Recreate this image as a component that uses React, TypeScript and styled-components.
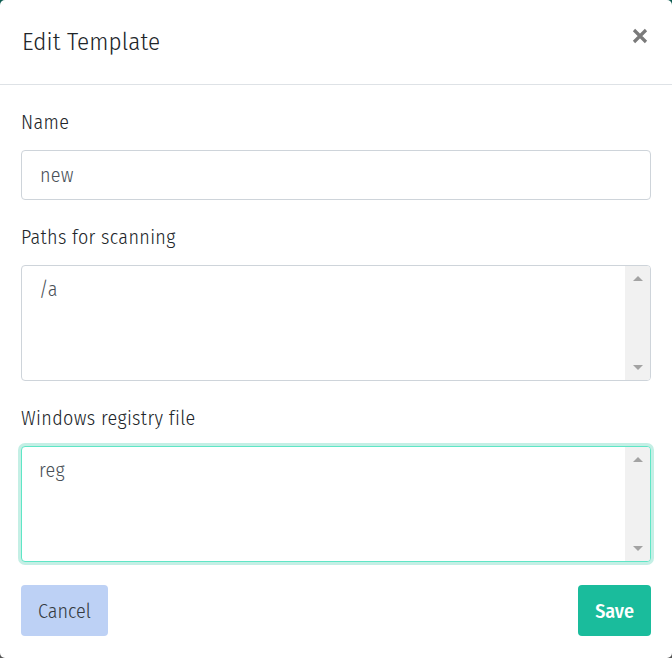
import React from "react";
import styled, { createGlobalStyle } from "styled-components";

const FONT = `"Fira Sans Condensed", "Liberation Sans Narrow", "DejaVu Sans Condensed", "Roboto Condensed", "Open Sans", sans-serif`;

const Global = createGlobalStyle`
  html, body { margin: 0; padding: 0; }
  body {
    background: linear-gradient(180deg, #0e5d52 0%, #2d4a45 60%, #555 100%);
    font-family: ${FONT};
  }
  * { box-sizing: border-box; }
`;

const Modal = styled.div`
  width: 672px;
  height: 658px;
  background: #fff;
  border-radius: 5px;
  display: flex;
  flex-direction: column;
  font-family: ${FONT};
  color: #212529;
`;

const Header = styled.div`
  height: 85px;
  padding: 0 22px;
  border-bottom: 1px solid #dee2e6;
  display: flex;
  align-items: center;
  justify-content: space-between;
`;

const Title = styled.h5`
  margin: 0;
  font-size: 25px;
  font-weight: 300;
  letter-spacing: 0.15px;
  line-height: 1.2;
  color: #212529;
`;

const Close = styled.button`
  border: 0;
  background: transparent;
  padding: 0;
  width: 18px;
  height: 18px;
  display: flex;
  align-items: center;
  justify-content: center;
  cursor: pointer;
  margin-top: -12px;
  margin-right: 1px;
`;

const Body = styled.div`
  padding: 24px 21px 0;
  display: flex;
  flex-direction: column;
`;

const Group = styled.div`
  display: flex;
  flex-direction: column;
  margin-bottom: 24px;
`;

const Label = styled.label`
  font-size: 20px;
  font-weight: 300;
  letter-spacing: 0.35px;
  line-height: 26px;
  margin-bottom: 15px;
  color: #212529;
`;

const Input = styled.input`
  height: 50px;
  width: 100%;
  border: 1px solid #ced4da;
  border-radius: 4px;
  padding: 0 18px;
  font-family: ${FONT};
  font-size: 20px;
  font-weight: 300;
  letter-spacing: 0.3px;
  color: #495057;
  outline: none;
`;

const AreaWrap = styled.div`
  position: relative;
  width: 100%;
  height: 116px;
`;

const TextArea = styled.textarea<{ $focused?: boolean }>`
  display: block;
  height: 100%;
  width: 100%;
  border: 1px solid ${(p) => (p.$focused ? "#5fe6c6" : "#ced4da")};
  box-shadow: ${(p) => (p.$focused ? "0 0 0 3px #c4efe5" : "none")};
  border-radius: 4px;
  padding: 10px 40px 12px 17px;
  font-family: ${FONT};
  font-size: 20px;
  font-weight: 300;
  letter-spacing: 0.3px;
  line-height: 26px;
  color: #495057;
  outline: none;
  resize: none;
  overflow: hidden;
`;

const ScrollTrack = styled.div`
  position: absolute;
  top: 1px;
  right: 1px;
  bottom: 1px;
  width: 25px;
  background: #f1f1f1;
  border-radius: 0 3px 3px 0;
  display: flex;
  flex-direction: column;
  justify-content: space-between;
  align-items: center;
  padding: 10px 0;
  pointer-events: none;
`;

const Arrow = styled.span<{ $dir: "up" | "down" }>`
  width: 0;
  height: 0;
  border-left: 5px solid transparent;
  border-right: 5px solid transparent;
  ${(p) =>
    p.$dir === "up"
      ? "border-bottom: 5px solid #a3a3a3;"
      : "border-top: 5px solid #a3a3a3;"}
`;

const Footer = styled.div`
  display: flex;
  justify-content: space-between;
  padding: 0 21px;
  margin-top: -1px;
`;

const Button = styled.button<{ $variant: "cancel" | "save" }>`
  height: 51px;
  padding: 0 17px;
  border: 0;
  border-radius: 4px;
  font-family: ${FONT};
  font-size: 20px;
  font-weight: ${(p) => (p.$variant === "save" ? 500 : 300)};
  background: ${(p) => (p.$variant === "save" ? "#1abc9c" : "#bdd1f5")};
  color: ${(p) => (p.$variant === "save" ? "#fff" : "#343a40")};
  cursor: pointer;
`;

function ScrollArea({ value, focused }: { value: string; focused?: boolean }) {
  return (
    <AreaWrap>
      <TextArea $focused={focused} defaultValue={value} />
      <ScrollTrack>
        <Arrow $dir="up" />
        <Arrow $dir="down" />
      </ScrollTrack>
    </AreaWrap>
  );
}

export default function App() {
  return (
    <>
      <Global />
      <Modal>
        <Header>
          <Title>Edit Template</Title>
          <Close aria-label="Close">
            <svg width="16" height="16" viewBox="0 0 16 16">
              <path d="M2 2 L14 14 M14 2 L2 14" stroke="#7a7a7a" strokeWidth="3.2" strokeLinecap="butt" />
            </svg>
          </Close>
        </Header>
        <Body>
          <Group>
            <Label>Name</Label>
            <Input defaultValue="new" />
          </Group>
          <Group>
            <Label>Paths for scanning</Label>
            <ScrollArea value="/a" />
          </Group>
          <Group>
            <Label>Windows registry file</Label>
            <ScrollArea value="reg" focused />
          </Group>
        </Body>
        <Footer>
          <Button $variant="cancel">Cancel</Button>
          <Button $variant="save">Save</Button>
        </Footer>
      </Modal>
    </>
  );
}
